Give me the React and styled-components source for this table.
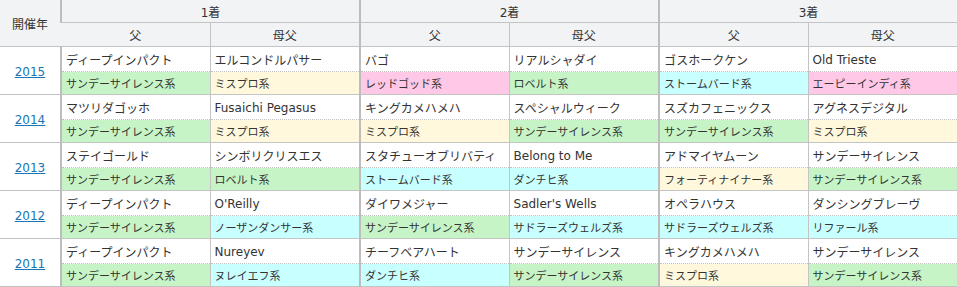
import React from 'react'
import styled, {createGlobalStyle} from 'styled-components'

const GlobalStyle = createGlobalStyle`
  html, body {
    margin: 0;
    padding: 0;
    background: #fff;
  }
  body {
    font-family: "DejaVu Sans", "Noto Sans CJK JP", sans-serif;
    color: #333;
  }
`

const lineColors = {
    g: '#c6f4c6',
    y: '#fff8dc',
    p: '#ffc8e6',
    c: '#c8ffff'
}

const colWidths = [61, 149, 150, 149, 150, 149, 149]

const races = [
    {
        year: 2015,
        names: ['ディープインパクト', 'エルコンドルパサー', 'バゴ', 'リアルシャダイ', 'ゴスホークケン', 'Old Trieste'],
        lines: [['サンデーサイレンス系', 'g'], ['ミスプロ系', 'y'], ['レッドゴッド系', 'p'], ['ロベルト系', 'g'], ['ストームバード系', 'c'], ['エーピーインディ系', 'p']]
    },
    {
        year: 2014,
        names: ['マツリダゴッホ', 'Fusaichi Pegasus', 'キングカメハメハ', 'スペシャルウィーク', 'スズカフェニックス', 'アグネスデジタル'],
        lines: [['サンデーサイレンス系', 'g'], ['ミスプロ系', 'y'], ['ミスプロ系', 'y'], ['サンデーサイレンス系', 'g'], ['サンデーサイレンス系', 'g'], ['ミスプロ系', 'y']]
    },
    {
        year: 2013,
        names: ['ステイゴールド', 'シンボリクリスエス', 'スタチューオブリバティ', 'Belong to Me', 'アドマイヤムーン', 'サンデーサイレンス'],
        lines: [['サンデーサイレンス系', 'g'], ['ロベルト系', 'g'], ['ストームバード系', 'c'], ['ダンチヒ系', 'c'], ['フォーティナイナー系', 'y'], ['サンデーサイレンス系', 'g']]
    },
    {
        year: 2012,
        names: ['ディープインパクト', "O'Reilly", 'ダイワメジャー', "Sadler's Wells", 'オペラハウス', 'ダンシングブレーヴ'],
        lines: [['サンデーサイレンス系', 'g'], ['ノーザンダンサー系', 'c'], ['サンデーサイレンス系', 'g'], ['サドラーズウェルズ系', 'c'], ['サドラーズウェルズ系', 'c'], ['リファール系', 'c']]
    },
    {
        year: 2011,
        names: ['ディープインパクト', 'Nureyev', 'チーフベアハート', 'サンデーサイレンス', 'キングカメハメハ', 'サンデーサイレンス'],
        lines: [['サンデーサイレンス系', 'g'], ['ヌレイエフ系', 'c'], ['ダンチヒ系', 'c'], ['サンデーサイレンス系', 'g'], ['ミスプロ系', 'y'], ['サンデーサイレンス系', 'g']]
    }
]

const Table = styled.table`
  width: 957px;
  table-layout: fixed;
  border-collapse: collapse;
  border-spacing: 0;
`

const Col = styled.col`
  width: ${p => p.$w}px;
`

const Th = styled.th`
  background: #f2f3f5;
  font-weight: normal;
  font-size: 12px;
  color: #333;
  text-align: center;
  vertical-align: middle;
  padding: 0;
  height: ${p => p.$h || 22}px;
  border-top: 0;
  border-bottom: 1px solid #c4c4c4;
  border-left: ${p => p.$group ? '2px solid #bdbdbd' : '1px solid #c4c4c4'};
  &:first-child {
    border-left: 0;
  }
`

const YearCell = styled.td`
  text-align: center;
  vertical-align: middle;
  padding: 0;
  border-bottom: 1px solid #c4c4c4;
  border-right: 2px solid #bdbdbd;
  a {
    color: #1a75b4;
    font-size: 12px;
    text-decoration: underline;
  }
`

const NameCell = styled.td`
  height: 23px;
  padding: 1px 0 0 4px;
  font-size: 12px;
  white-space: nowrap;
  overflow: hidden;
  vertical-align: middle;
  border-left: ${p => p.$group ? '2px solid #bdbdbd' : '1px solid #c4c4c4'};
  border-bottom: 1px dotted #c0c0c0;
`

const LineCell = styled.td`
  height: 22px;
  padding: 0 0 0 4px;
  font-size: 11px;
  white-space: nowrap;
  overflow: hidden;
  vertical-align: middle;
  background: ${p => lineColors[p.$c]};
  border-left: ${p => p.$group ? '2px solid #bdbdbd' : '1px solid #c4c4c4'};
  border-bottom: 1px solid #c4c4c4;
`

export default function App() {
    return (
        <>
            <GlobalStyle/>
            <Table>
                <colgroup>
                    {colWidths.map((w, i) => <Col key={i} $w={w}/>)}
                </colgroup>
                <thead>
                    <tr>
                        <Th rowSpan={2}>開催年</Th>
                        <Th colSpan={2} $group>1着</Th>
                        <Th colSpan={2} $group>2着</Th>
                        <Th colSpan={2} $group>3着</Th>
                    </tr>
                    <tr>
                        {[0, 1, 2].map(i => (
                            <React.Fragment key={i}>
                                <Th $h={23} $group>父</Th>
                                <Th $h={23}>母父</Th>
                            </React.Fragment>
                        ))}
                    </tr>
                </thead>
                <tbody>
                    {races.map(r => (
                        <React.Fragment key={r.year}>
                            <tr>
                                <YearCell rowSpan={2}><a href="#">{r.year}</a></YearCell>
                                {r.names.map((n, i) => (
                                    <NameCell key={i} $group={i % 2 === 0}>{n}</NameCell>
                                ))}
                            </tr>
                            <tr>
                                {r.lines.map(([t, c], i) => (
                                    <LineCell key={i} $c={c} $group={i % 2 === 0}>{t}</LineCell>
                                ))}
                            </tr>
                        </React.Fragment>
                    ))}
                </tbody>
            </Table>
        </>
    )
}
